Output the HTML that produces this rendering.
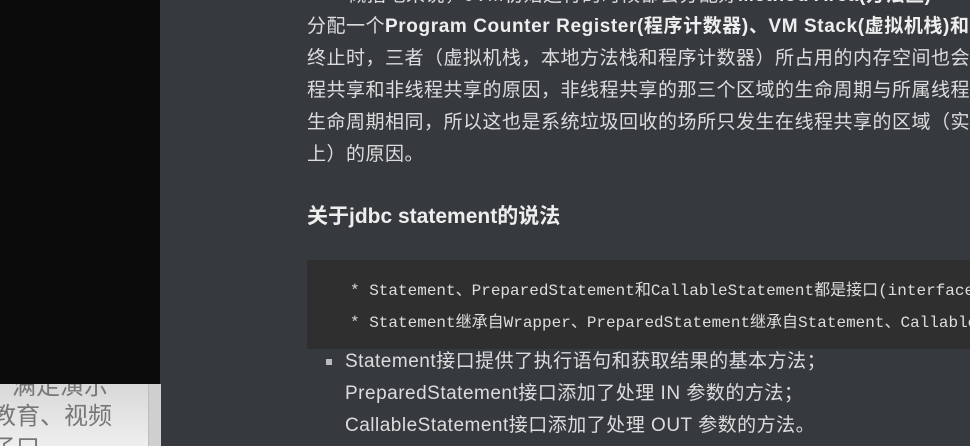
<!DOCTYPE html>
<html><head><meta charset="utf-8"><style>
*{margin:0;padding:0}
body{width:970px;height:446px;overflow:hidden;background:#363a3f;position:relative;font-family:"Liberation Sans","Noto Sans CJK SC",sans-serif;color:#dcdcdc}
.wrap{position:absolute;left:0;top:0;width:970px;height:446px;overflow:hidden}
.black{position:absolute;left:0;top:0;width:160px;height:384px;background:#0b0b0b}
.lp{position:absolute;left:0;top:384px;width:148px;height:62px;background:linear-gradient(#d8d8d8,#efefef);overflow:hidden}
.lpb{position:absolute;left:148px;top:384px;width:12px;height:62px;background:#cfcfcf;border-left:1px solid #bbb}
.lp div{position:absolute;left:-8px;font-size:24px;color:#777;white-space:nowrap}
.t{position:absolute;left:307px;font-size:19px;letter-spacing:0.5px;white-space:nowrap;line-height:32px}
b{color:#eee;letter-spacing:0.6px}
h3{position:absolute;left:307px;top:200px;font-size:21px;font-weight:bold;color:#eee;white-space:nowrap}
.code{position:absolute;left:307px;top:260px;width:663px;height:89px;background:#2f2f2f}
.c{position:absolute;left:350px;font-family:"Liberation Mono","Noto Sans CJK SC",monospace;font-size:16px;color:#ddd;white-space:nowrap}
.dot{position:absolute;left:326px;top:359px;width:6px;height:6px;background:#bbb}
</style></head><body><div class="wrap">
<div class="black"></div>
<div class="lp"><div style="top:-18px">&nbsp;&nbsp;&nbsp;满足演示</div><div style="top:12px">教育、视频</div><div style="top:44px">子曰</div></div>
<div class="lpb"></div>
<div class="t" style="top:-20px">&nbsp;&nbsp;&nbsp;&nbsp;&nbsp;&nbsp;&nbsp;概括地来说，JVM初始运行的时候都会分配好<b>Method Area(方法区)</b></div>
<div class="t" style="top:11px">分配一个<b>Program Counter Register(程序计数器)、VM Stack(虚拟机栈)和</b></div>
<div class="t" style="top:43px">终止时，三者（虚拟机栈，本地方法栈和程序计数器）所占用的内存空间也会</div>
<div class="t" style="top:75px">程共享和非线程共享的原因，非线程共享的那三个区域的生命周期与所属线程</div>
<div class="t" style="top:107px">生命周期相同，所以这也是系统垃圾回收的场所只发生在线程共享的区域（实</div>
<div class="t" style="top:139px">上）的原因。</div>
<h3>关于jdbc statement的说法</h3>
<div class="code"></div>
<div class="c" style="top:276px">* Statement、PreparedStatement和CallableStatement都是接口(interface)</div>
<div class="c" style="top:308px">* Statement继承自Wrapper、PreparedStatement继承自Statement、CallableStatement</div>
<div class="dot"></div>
<div class="t" style="top:346px;left:345px">Statement接口提供了执行语句和获取结果的基本方法；</div>
<div class="t" style="top:378px;left:345px">PreparedStatement接口添加了处理 IN 参数的方法；</div>
<div class="t" style="top:410px;left:345px">CallableStatement接口添加了处理 OUT 参数的方法。</div>
</div></body></html>
